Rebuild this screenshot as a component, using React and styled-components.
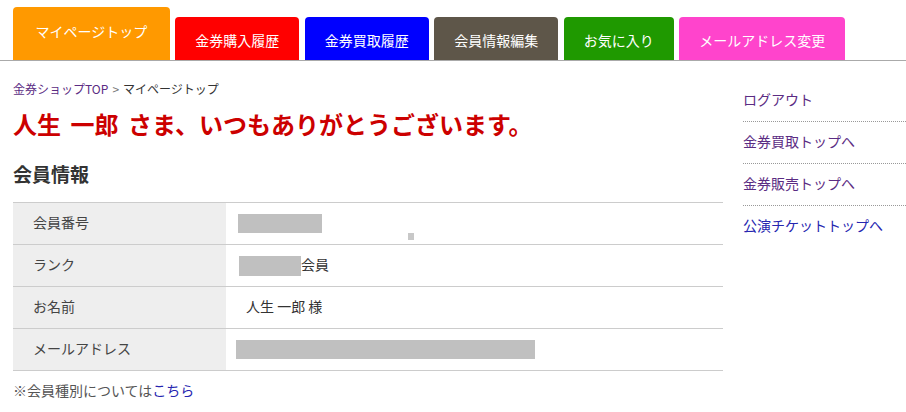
import React from "react";
import styled, { createGlobalStyle } from "styled-components";

const GlobalStyle = createGlobalStyle`
  html, body {
    margin: 0;
    padding: 0;
    background: #fff;
    overflow: hidden;
  }
  body {
    font-family: "Noto Sans CJK JP", "Noto Sans", sans-serif;
    color: #333;
  }
`;

const TabBar = styled.nav`
  display: flex;
  align-items: flex-end;
  gap: 5.5px;
  height: 60px;
  padding-left: 13px;
  border-bottom: 1px solid #aaa;
`;

const Tab = styled.a`
  display: block;
  box-sizing: border-box;
  height: ${(p) => (p.$active ? "53px" : "43px")};
  padding: ${(p) => (p.$active ? "15px 22.5px 0" : "14px 20px 0")};
  background: ${(p) => p.$color};
  border-radius: 4px 4px 0 0;
  color: #fff;
  font-size: 14px;
  line-height: 18px;
  text-align: center;
  text-decoration: none;
  white-space: nowrap;
`;

const Layout = styled.div`
  display: flex;
  gap: 20px;
  padding-left: 13px;
`;

const Main = styled.main`
  width: 710px;
  flex-shrink: 0;
  padding-top: 19px;
`;

const Breadcrumb = styled.div`
  font-size: 12px;
  line-height: 18px;
  color: #333;

  a {
    color: #5b2c83;
    text-decoration: none;
  }
  span {
    color: #777;
    margin: 0 4px;
  }
`;

const Greeting = styled.h1`
  margin: 11px 0 0;
  font-size: 24px;
  line-height: 30px;
  font-weight: bold;
  color: #cc0000;
  white-space: nowrap;
  word-spacing: 4px;
`;

const SectionTitle = styled.h2`
  margin: 22px 0 0;
  font-size: 19px;
  line-height: 26px;
  font-weight: bold;
  color: #333;
`;

const InfoTable = styled.div`
  margin-top: 15px;
  border-top: 1px solid #ccc;
`;

const Row = styled.div`
  display: flex;
  height: 41px;
  border-bottom: 1px solid #ccc;
  font-size: 14px;
`;

const Label = styled.div`
  width: 213px;
  flex-shrink: 0;
  box-sizing: border-box;
  padding: 0 0 3px 20px;
  background: #eee;
  display: flex;
  align-items: center;
  color: #444;
`;

const Value = styled.div`
  flex: 1;
  display: flex;
  align-items: center;
  padding-left: ${(p) => p.$pad || 12}px;
  color: #333;
`;

const Text = styled.span`
  display: inline-block;
  padding-bottom: 4px;
`;

const Redacted = styled.span`
  display: inline-block;
  width: ${(p) => p.$w}px;
  height: ${(p) => p.$h || 19}px;
  margin-left: ${(p) => p.$shift || 0}px;
  background: #c0c0c0;
`;

const Speck = styled.span`
  align-self: flex-end;
  width: 6px;
  height: 7px;
  margin: 0 0 4px 86px;
  background: #c8c8c8;
`;

const Note = styled.p`
  margin: 10px 0 0;
  font-size: 14px;
  line-height: 18px;
  color: #555;

  a {
    color: #2626b0;
    text-decoration: none;
  }
`;

const Side = styled.aside`
  flex: 1;
  padding-top: 19px;
`;

const SideLink = styled.a`
  display: block;
  padding: 9px 0 12px;
  font-size: 14px;
  line-height: 20px;
  color: ${(p) => (p.$fresh ? "#2626b0" : "#5b2c83")};
  text-decoration: none;
  white-space: nowrap;
  border-bottom: ${(p) => (p.$last ? "none" : "1px dotted #999")};
`;

const tabs = [
  { label: "マイページトップ", color: "#ff9900", active: true },
  { label: "金券購入履歴", color: "#ff0000" },
  { label: "金券買取履歴", color: "#0000ff" },
  { label: "会員情報編集", color: "#5e5649" },
  { label: "お気に入り", color: "#1f9900" },
  { label: "メールアドレス変更", color: "#ff44cc" },
];

const sideLinks = ["ログアウト", "金券買取トップへ", "金券販売トップへ", "公演チケットトップへ"];

export default function App() {
  return (
    <>
      <GlobalStyle />
      <TabBar>
        {tabs.map((t) => (
          <Tab key={t.label} href="#" $color={t.color} $active={t.active}>
            {t.label}
          </Tab>
        ))}
      </TabBar>
      <Layout>
        <Main>
          <Breadcrumb>
            <a href="#">金券ショップTOP</a>
            <span>&gt;</span>
            マイページトップ
          </Breadcrumb>
          <Greeting>人生 一郎 さま、いつもありがとうございます。</Greeting>
          <SectionTitle>会員情報</SectionTitle>
          <InfoTable>
            <Row>
              <Label>会員番号</Label>
              <Value>
                <Redacted $w={84} />
                <Speck />
              </Value>
            </Row>
            <Row>
              <Label>ランク</Label>
              <Value>
                <Redacted $w={62} $h={20} $shift={1} />
                <Text>会員</Text>
              </Value>
            </Row>
            <Row>
              <Label>お名前</Label>
              <Value $pad={20}>
                <Text>人生 一郎 様</Text>
              </Value>
            </Row>
            <Row>
              <Label>メールアドレス</Label>
              <Value $pad={10}>
                <Redacted $w={299} />
              </Value>
            </Row>
          </InfoTable>
          <Note>
            ※会員種別については<a href="#">こちら</a>
          </Note>
        </Main>
        <Side>
          {sideLinks.map((l, i) => (
            <SideLink
              key={l}
              href="#"
              $fresh={i === sideLinks.length - 1}
              $last={i === sideLinks.length - 1}
            >
              {l}
            </SideLink>
          ))}
        </Side>
      </Layout>
    </>
  );
}
